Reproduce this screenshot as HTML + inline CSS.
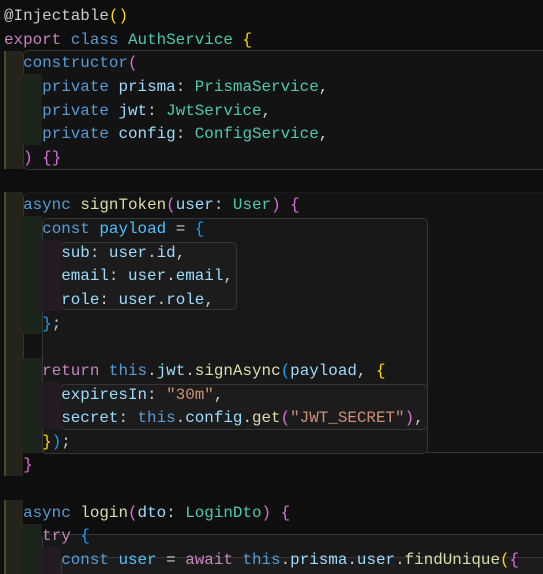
<!DOCTYPE html>
<html><head><meta charset="utf-8"><style>
html,body{margin:0;padding:0;width:543px;height:574px;overflow:hidden;background:#0e0e0e;}
#w{position:relative;width:543px;height:574px;overflow:hidden;}
.b{position:absolute;box-sizing:border-box;border:1px solid #363636;border-radius:5px;}
.y1,.yl,.g,.pk{position:absolute;}
.y1{left:6px;width:17px;background:#24241a}
.yl{left:4px;width:2px;background:#4a4a28}
.g{left:23px;width:19px;background:#1a241b}
.pk{left:42px;width:19px;background:#251b23}
pre{position:absolute;left:4px;top:5px;margin:0;font-family:"Liberation Mono",monospace;font-size:15.9px;line-height:23.65px;color:#cccccc;white-space:pre;}
.k{color:#569cd6}.p{color:#c586c0}.t{color:#4ec9b0}.f{color:#dcdcaa}.v{color:#9cdcfe}.c{color:#4fc1ff}.s{color:#ce9178}
.y{color:#ffd700}.m{color:#da70d6}.u{color:#179fff}
</style></head><body><div id="w">
<div class="b" style="left:23px;top:50px;width:540px;height:120px;background:#131313;"></div>
<div class="b" style="left:23px;top:192px;width:540px;height:261px;background:#131313;border-top-color:#1a1a1a"></div>
<div class="b" style="left:42px;top:218px;width:386px;height:236px;background:#181818;"></div>
<div class="b" style="left:60px;top:242px;width:177px;height:68px;background:#1c1c1c;"></div>
<div class="b" style="left:60px;top:384px;width:368px;height:46px;background:#1c1c1c;"></div>
<div class="b" style="left:42px;top:534px;width:510px;height:40px;background:#181818;border-bottom:none;border-radius:5px 0 0 0"></div>
<div class="b" style="left:61px;top:557px;width:490px;height:17px;background:#1c1c1c;border-bottom:none;border-radius:5px 0 0 0"></div>

<div class="y1" style="top:50.5px;height:118.3px"></div>
<div class="y1" style="top:192.4px;height:283.8px"></div>
<div class="y1" style="top:499.9px;height:74.1px"></div>
<div class="yl" style="top:50.5px;height:118.3px"></div>
<div class="yl" style="top:192.4px;height:283.8px"></div>
<div class="yl" style="top:499.9px;height:74.1px"></div>
<div class="g" style="top:74.2px;height:70.9px"></div>
<div class="g" style="top:216px;height:118.3px"></div>
<div class="g" style="top:358px;height:94.6px"></div>
<div class="g" style="top:523.5px;height:50.5px"></div>
<div class="pk" style="top:239.7px;height:70.9px"></div>
<div class="pk" style="top:381.6px;height:47.3px"></div>
<div class="pk" style="top:547.2px;height:26.8px"></div>

<pre>@Injectable<span class="y">()</span>
<span class="p">export</span> <span class="k">class</span> <span class="t">AuthService</span> <span class="y">{</span>
  <span class="k">constructor</span><span class="m">(</span>
    <span class="k">private</span> <span class="v">prisma</span>: <span class="t">PrismaService</span>,
    <span class="k">private</span> <span class="v">jwt</span>: <span class="t">JwtService</span>,
    <span class="k">private</span> <span class="v">config</span>: <span class="t">ConfigService</span>,
  <span class="m">)</span> <span class="m">{}</span>

  <span class="k">async</span> <span class="f">signToken</span><span class="m">(</span><span class="v">user</span>: <span class="t">User</span><span class="m">)</span> <span class="m">{</span>
    <span class="k">const</span> <span class="c">payload</span> = <span class="u">{</span>
      <span class="v">sub</span>: <span class="v">user</span>.<span class="v">id</span>,
      <span class="v">email</span>: <span class="v">user</span>.<span class="v">email</span>,
      <span class="v">role</span>: <span class="v">user</span>.<span class="v">role</span>,
    <span class="u">}</span>;

    <span class="p">return</span> <span class="k">this</span>.<span class="v">jwt</span>.<span class="f">signAsync</span><span class="u">(</span><span class="v">payload</span>, <span class="y">{</span>
      <span class="v">expiresIn</span>: <span class="s">"30m"</span>,
      <span class="v">secret</span>: <span class="k">this</span>.<span class="v">config</span>.<span class="f">get</span><span class="m">(</span><span class="s">"JWT_SECRET"</span><span class="m">)</span>,
    <span class="y">}</span><span class="u">)</span>;
  <span class="m">}</span>

  <span class="k">async</span> <span class="f">login</span><span class="m">(</span><span class="v">dto</span>: <span class="t">LoginDto</span><span class="m">)</span> <span class="m">{</span>
    <span class="p">try</span> <span class="u">{</span>
      <span class="k">const</span> <span class="c">user</span> = <span class="p">await</span> <span class="k">this</span>.<span class="v">prisma</span>.<span class="v">user</span>.<span class="f">findUnique</span><span class="y">(</span><span class="m">{</span></pre>
</div></body></html>
